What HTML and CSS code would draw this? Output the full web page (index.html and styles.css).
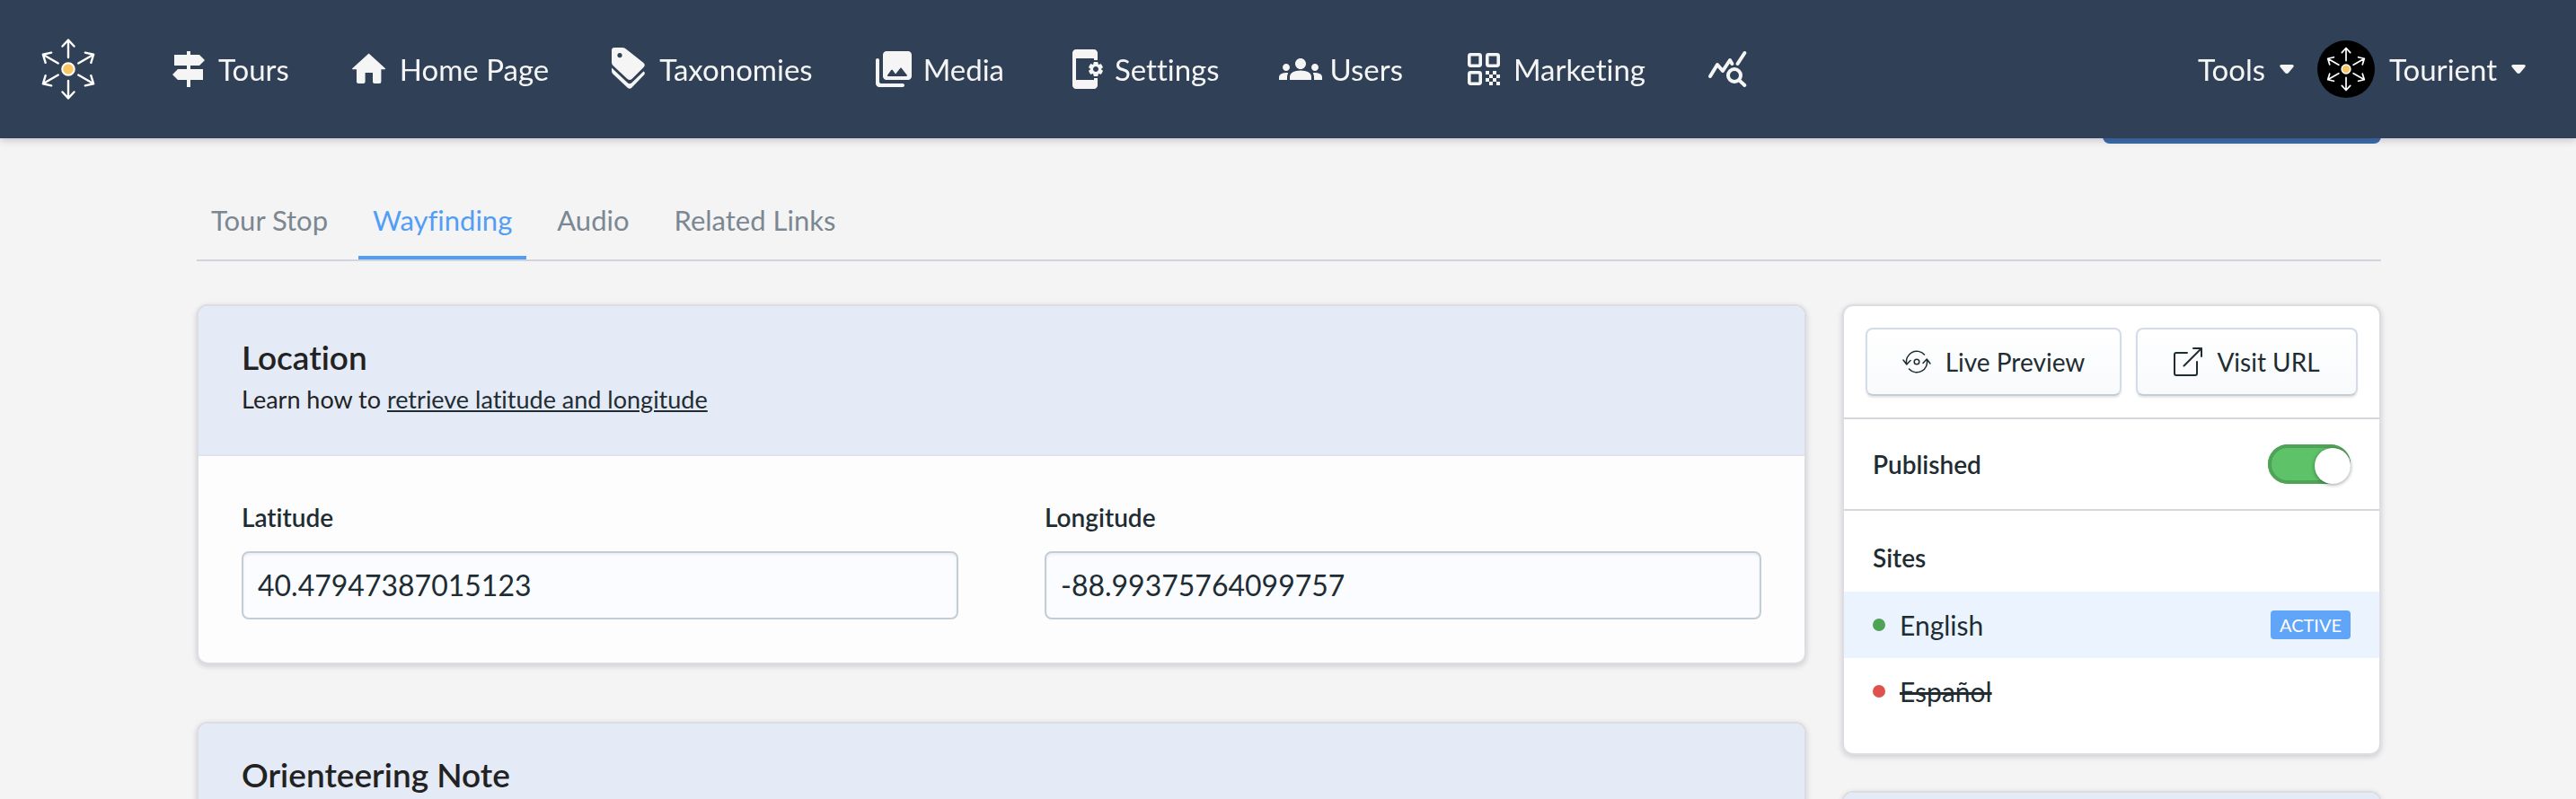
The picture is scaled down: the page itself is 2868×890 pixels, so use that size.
FILE: index.html
```html
<!DOCTYPE html>
<html lang="en">
<head>
    <meta charset="UTF-8">
    <meta name="viewport" content="width=device-width, initial-scale=1.0">
    <title>Tourient</title>
    <link rel="stylesheet" href="styles.css">
</head>
<body>

    <!-- shared logo, used in the header and in the avatar -->
    <svg class="sprite" aria-hidden="true">
        <symbol id="logo" viewBox="-36 -36 72 72">
            <g fill="none" stroke="#fff" stroke-width="2.4" stroke-linecap="round" stroke-linejoin="round">
                <g id="arrow">
                    <path d="M0-13V-32M-6.5-25.500L0-32.500L6.500-25.500"/>
                </g>
                <use href="#arrow" transform="rotate(60)"/>
                <use href="#arrow" transform="rotate(120)"/>
                <use href="#arrow" transform="rotate(180)"/>
                <use href="#arrow" transform="rotate(240)"/>
                <use href="#arrow" transform="rotate(300)"/>
            </g>
            <circle r="6.800" fill="#f8c764" stroke="#fff" stroke-width="2"/>
        </symbol>
    </svg>

    <header class="topbar">
        <a class="logo" href="#" aria-label="Dashboard"><svg><use href="#logo"/></svg></a>
        <nav class="nav">
            <a href="#">
                <svg viewBox="0 0 24 24"><path d="M13 10h5l3-3-3-3h-5V2h-2v2H4v6h7v2H6l-3 3 3 3h5v4h2v-4h7v-6h-7v-2z"/></svg>
                Tours
            </a>
            <a href="#">
                <svg viewBox="0 0 24 24"><path d="M11.300 3.300L20.500 11.600q.3.500-.3.500H18.200V19q0 1-1 1H14.500q-1 0-1-1V14H9.300V19q0 1-1 1H5.500q-1 0-1-1V12.100H2.400q-.6 0-.3-.5z"/></svg>
                Home Page
            </a>
            <a href="#">
                <svg viewBox="0 0 48 48"><path fill-rule="evenodd" d="M7 0h9q2.500 0 4.500 2L39.500 17q2.500 2.500 0 5L26.500 35q-2.500 2-5 0L5.500 20Q4 18.500 4 16.500V3q0-3 3-3zm6 6a2.600 2.600 0 1 0 0 5.200A2.600 2.600 0 0 0 13 6z"/><path d="M4 22.500L22 39.500q2 1.500 4 0L39.500 26.500q2.500 1.500.5 4L26 45q-2 1.500-4 0L5.500 29.500Q4 28 4 26z"/></svg>
                Taxonomies
            </a>
            <a href="#">
                <svg viewBox="0 0 24 24"><path d="M22 16V4c0-1.100-.9-2-2-2H8c-1.100 0-2 .9-2 2v12c0 1.100.9 2 2 2h12c1.100 0 2-.9 2-2zm-10.600-3.470l1.630 2.180 2.580-3.220c.2-.25.580-.25.780 0l2.960 3.700c.26.330.03.810-.39.810H9c-.41 0-.65-.47-.4-.8l2-2.670c.2-.26.600-.26.800 0zM2 7v13c0 1.100.9 2 2 2h13c.55 0 1-.45 1-1s-.45-1-1-1H5c-.55 0-1-.45-1-1V7c0-.55-.45-1-1-1s-1 .45-1 1z"/></svg>
                Media
            </a>
            <a href="#">
                <svg viewBox="0 0 24 24"><path d="M21.810 12.740l-.82-.63v-.22l.8-.63c.16-.12.200-.34.100-.51l-.85-1.480c-.07-.13-.21-.2-.35-.2-.05 0-.1.010-.15.030l-.95.380c-.08-.05-.11-.07-.19-.11l-.15-1.010c-.03-.21-.2-.36-.4-.36h-1.710c-.2 0-.37.150-.4.340l-.14 1.010c-.03.020-.07.030-.1.050l-.09.060-.95-.38c-.05-.02-.1-.03-.15-.03-.14 0-.27.070-.35.200l-.85 1.480c-.1.170-.06.390.1.510l.8.630v.23l-.8.630c-.16.120-.2.340-.1.510l.85 1.480c.07.130.21.200.35.200.05 0 .1-.01.150-.03l.95-.37c.08.050.120.070.200.110l.15 1.010c.03.200.2.340.4.340h1.710c.2 0 .37-.15.400-.34l.15-1.010c.03-.02.070-.03.100-.05l.09-.06.95.380c.05.020.1.030.15.030.14 0 .27-.07.350-.2l.85-1.480c.1-.17.060-.39-.1-.51zM18 13.500c-.83 0-1.500-.67-1.500-1.500s.67-1.500 1.500-1.500 1.500.67 1.500 1.500-.67 1.500-1.500 1.500zM17 17v1H7V6h10v1h2V3c0-1.100-.9-2-2-2H7c-1.100 0-2 .9-2 2v18c0 1.100.9 2 2 2h10c1.100 0 2-.9 2-2v-4h-2z"/></svg>
                Settings
            </a>
            <a href="#">
                <svg viewBox="0 0 24 24"><path d="M12 12.750c1.630 0 3.070.39 4.240.9 1.080.48 1.760 1.560 1.760 2.730V18H6v-1.610c0-1.180.68-2.260 1.760-2.730 1.170-.52 2.610-.91 4.240-.91zM4 13c1.100 0 2-.9 2-2s-.9-2-2-2-2 .9-2 2 .9 2 2 2zm1.130 1.100c-.37-.06-.74-.1-1.130-.1-.99 0-1.930.21-2.780.58A2.010 2.010 0 0 0 0 16.430V18h4.500v-1.610c0-.83.23-1.610.63-2.290zM20 13c1.100 0 2-.9 2-2s-.9-2-2-2-2 .9-2 2 .9 2 2 2zm4 3.430c0-.81-.48-1.530-1.220-1.850A6.950 6.950 0 0 0 20 14c-.39 0-.76.04-1.130.1.4.68.63 1.460.63 2.290V18H24v-1.570zM12 6c1.660 0 3 1.340 3 3s-1.340 3-3 3-3-1.340-3-3 1.340-3 3-3z"/></svg>
                Users
            </a>
            <a href="#">
                <svg viewBox="0 0 24 24">
                    <g fill="none" stroke="currentColor" stroke-width="1.800">
                        <rect x="3.900" y="3.900" width="6.200" height="6.200" rx=".8"/>
                        <rect x="13.900" y="3.900" width="6.200" height="6.200" rx=".8"/>
                        <rect x="3.900" y="13.900" width="6.200" height="6.200" rx=".8"/>
                    </g>
                    <path d="M13 13h2v2h-2zM17 13h2v2h-2zM15 15h2v2h-2zM19 15h2v2h-2zM13 17h2v2h-2zM17 17h2v2h-2zM15 19h2v2h-2zM19 19h2v2h-2z"/>
                </svg>
                Marketing
            </a>
            <a href="#" aria-label="Analytics">
                <svg viewBox="0 0 24 24"><g fill="none" stroke="currentColor" stroke-width="2" stroke-linecap="round" stroke-linejoin="round"><path d="M3 16l4-6.500 3 3.500 4-6 1.200 2M18.300 9L22.200 3M19.300 18.300L22.200 21"/><circle cx="16.500" cy="15.500" r="3.500"/></g></svg>
            </a>
        </nav>
        <div class="account">
            <button type="button">Tools <svg class="caret" viewBox="0 0 16 10"><path d="M2 0h12q3 .5 1 3L10 9q-2 2-4 0L1 3Q-1 .5 2 0z"/></svg></button>
            <button type="button">
                <span class="avatar"><svg><use href="#logo"/></svg></span>
                Tourient
                <svg class="caret" viewBox="0 0 16 10"><path d="M2 0h12q3 .5 1 3L10 9q-2 2-4 0L1 3Q-1 .5 2 0z"/></svg>
            </button>
        </div>
    </header>

    <main class="page">
        <div class="actions">
            <button type="submit" class="btn-save" aria-label="Save"></button>
        </div>

        <nav class="tabs">
            <a href="#">Tour Stop</a>
            <a href="#" class="active">Wayfinding</a>
            <a href="#">Audio</a>
            <a href="#">Related Links</a>
        </nav>

        <div class="columns">
            <form class="sections">
                <section class="card">
                    <div class="card-header">
                        <h2>Location</h2>
                        <p>Learn how to <a href="#">retrieve latitude and longitude</a></p>
                    </div>
                    <div class="card-body">
                        <div class="field">
                            <label for="latitude">Latitude</label>
                            <input type="text" id="latitude" name="latitude" value="40.47947387015123">
                        </div>
                        <div class="field">
                            <label for="longitude">Longitude</label>
                            <input type="text" id="longitude" name="longitude" value="-88.99375764099757">
                        </div>
                    </div>
                </section>

                <section class="card">
                    <div class="card-header">
                        <h2>Orienteering Note</h2>
                    </div>
                </section>
            </form>

            <aside class="sidebar">
                <section class="card">
                    <div class="preview">
                        <button type="button" class="btn btn-wide">
                            <svg viewBox="0 0 32 32"><g fill="none" stroke="currentColor" stroke-width="1.500" stroke-linecap="round" stroke-linejoin="round"><path d="M4.800 18.500A11.500 11.500 0 0 1 24.500 8M27.200 13.500A11.500 11.500 0 0 1 7.500 24M1 14l3.800 5 4.200-4.500M23 17.500l4.200-4.500 3.800 5"/><circle cx="16" cy="16" r="2.800"/></g></svg>
                            Live Preview
                        </button>
                        <button type="button" class="btn">
                            <svg viewBox="0 0 32 32"><g fill="none" stroke="currentColor" stroke-width="2" stroke-linecap="round" stroke-linejoin="round"><path d="M15 6H3Q1 6 1 8v21q0 2 2 2h21q2 0 2-2V16M11.500 20.500L31 1M22 1h9v9"/></g></svg>
                            Visit URL
                        </button>
                    </div>
                    <div class="published">
                        <label for="published">Published</label>
                        <input type="checkbox" role="switch" class="toggle" id="published" name="published" checked>
                    </div>
                    <div class="sites">
                        <h3>Sites</h3>
                        <a href="#" class="site current"><span class="dot live"></span>English<span class="badge">ACTIVE</span></a>
                        <a href="#" class="site"><span class="dot"></span><s>Español</s></a>
                    </div>
                </section>

                <section class="card">
                    <div class="card-header"></div>
                </section>
            </aside>
        </div>
    </main>

</body>
</html>
```
FILE: styles.css
```css
* {
    box-sizing: border-box;
}

body {
    margin: 0;
    height: 100vh;
    overflow: hidden;
    background-color: #f4f4f4;
    color: #1f2d33;
    font-family: Lato, sans-serif;
    font-size: 28px;
    line-height: 36px;
    font-variant-ligatures: none;
}

h2, h3, p {
    margin: 0;
}

a {
    color: inherit;
    text-decoration: none;
}

button, input {
    font: inherit;
    color: inherit;
}

.sprite {
    position: absolute;
    width: 0;
    height: 0;
}

/* header */
.topbar {
    position: fixed;
    top: 0;
    left: 0;
    right: 0;
    z-index: 10;
    display: flex;
    align-items: center;
    height: 154px;
    padding: 0 56px 0 40px;
    background-color: #304056;
    color: #f5f5f5;
    font-size: 33px;
    line-height: 40px;
    box-shadow: 0 2px 8px rgba(40, 40, 80, 0.25);
}

.logo svg {
    display: block;
    width: 72px;
    height: 72px;
}

.nav {
    display: flex;
    gap: 66px;
    margin-left: 74px;
}

.nav a {
    display: flex;
    align-items: center;
    gap: 9px;
}

.nav svg {
    width: 48px;
    height: 48px;
    fill: currentColor;
}

.account {
    display: flex;
    gap: 26px;
    margin-left: auto;
}

.account button {
    display: flex;
    align-items: center;
    gap: 16px;
    padding: 0;
    border: none;
    background: none;
    cursor: pointer;
}

.caret {
    width: 16px;
    height: 10px;
    fill: currentColor;
}

.avatar {
    display: flex;
    width: 64px;
    height: 64px;
    padding: 6px;
    border-radius: 50%;
    background-color: #000;
}

.avatar svg {
    width: 52px;
    height: 52px;
}

/* page */
.page {
    padding: 80px 217px 0 219px;
}

.actions {
    display: flex;
    justify-content: flex-end;
}

.btn-save {
    width: 310px;
    height: 80px;
    border: none;
    border-radius: 8px;
    background-color: #3b6ba5;
}

.tabs {
    display: flex;
    gap: 18px;
    margin-top: 56px;
    border-bottom: 2px solid #d1d4da;
    color: #7b8792;
    font-size: 31px;
    line-height: 40px;
}

.tabs a {
    padding: 9px 16px 20px;
    border-bottom: 4px solid transparent;
}

.tabs .active {
    color: #529ef7;
    border-bottom-color: #529ef7;
}

.columns {
    display: grid;
    grid-template-columns: 1fr 600px;
    align-items: start;
    gap: 40px;
    margin-top: 48px;
}

.card {
    overflow: hidden;
    border: 2px solid #dcdde0;
    border-radius: 12px;
    background-color: #fdfdfd;
    box-shadow: 0 2px 6px rgba(40, 40, 80, 0.2);
}

.sections .card {
    margin-bottom: 64px;
}

.card-header {
    min-height: 167px;
    padding: 35px 48px;
    border-bottom: 2px solid #dfe3ea;
    background-color: #e4eaf6;
    color: #222;
    font-size: 27px;
}

.card-header h2 {
    font-size: 37px;
    font-weight: 600;
    line-height: 44px;
}

.card-header p {
    margin-top: 7px;
}

.card-header a {
    color: #1f2d33;
    text-decoration: underline;
}

.card-body {
    display: grid;
    grid-template-columns: 1fr 1fr;
    gap: 96px;
    padding: 50px 48px 48px;
}

label, h3 {
    font-size: 28px;
    font-weight: 600;
    line-height: 36px;
}

.field label {
    display: block;
    margin-bottom: 20px;
}

.field input {
    display: block;
    width: 100%;
    height: 76px;
    padding: 0 16px 2px;
    border: 2px solid #c4ccd4;
    border-radius: 8px;
    background-color: #fbfcff;
    box-shadow: inset 0 2px 3px rgba(0, 0, 0, 0.06);
    font-size: 32px;
}

/* sidebar */
.sidebar .card {
    margin-bottom: 40px;
    background-color: #fff;
}

.preview {
    display: flex;
    gap: 16px;
    padding: 24px;
    border-bottom: 2px solid #d3d7dc;
}

.btn {
    display: flex;
    flex: 1 1 247px;
    align-items: center;
    justify-content: center;
    gap: 16px;
    height: 76px;
    padding: 0;
    border: 2px solid #d3dce8;
    border-bottom-color: #c4ccd4;
    border-radius: 8px;
    background: linear-gradient(#fff, #f8fafc);
    box-shadow: 0 2px 2px rgba(0, 0, 0, 0.1);
    cursor: pointer;
}

.btn-wide {
    flex-basis: 285px;
}

.btn svg {
    width: 32px;
    height: 32px;
}

.published {
    display: flex;
    align-items: center;
    justify-content: space-between;
    height: 102px;
    padding: 0 32px;
    border-bottom: 2px solid #d3d7dc;
}

.toggle {
    display: flex;
    justify-content: flex-end;
    width: 92px;
    height: 44px;
    margin: 0;
    padding-top: 4px;
    border-radius: 22px;
    background-color: #5ec269;
    box-shadow: inset 0 0 0 4px #4fa356;
    appearance: none;
    cursor: pointer;
}

.toggle::before {
    content: "";
    width: 40px;
    height: 40px;
    border-radius: 50%;
    background-color: #fff;
    box-shadow: 0 1px 4px rgba(0, 0, 0, 0.4);
}

.sites {
    padding: 34px 0 32px;
}

.sites h3 {
    margin: 0 32px 20px;
}

.site {
    display: flex;
    align-items: center;
    gap: 16px;
    height: 74px;
    padding: 0 32px;
    font-size: 30px;
}

.site.current {
    background-color: #ebf4fe;
}

.dot {
    width: 14px;
    height: 14px;
    border-radius: 50%;
    background-color: #df524d;
}

.dot.live {
    background-color: #4fa356;
}

.badge {
    margin-left: auto;
    padding: 0 10px;
    border-radius: 4px;
    background-color: #60a5f7;
    color: #fff;
    font-size: 20px;
    line-height: 32px;
}
```
